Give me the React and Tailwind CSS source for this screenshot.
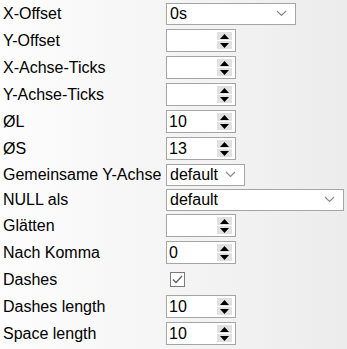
import React from 'react'

const font = { fontFamily: '"Liberation Sans", Arial, sans-serif' }

const Spinner = () => (
	<div className="flex flex-col w-[15px] h-[17px] gap-px">
		<div className="flex-1 bg-[#e1e1e1] flex items-center justify-center">
			<svg width="9" height="5" viewBox="0 0 9 5">
				<path d="M4.5 0 L9 5 L0 5 Z" fill="#000" />
			</svg>
		</div>
		<div className="flex-1 bg-[#e1e1e1] flex items-center justify-center">
			<svg width="9" height="5" viewBox="0 0 9 5">
				<path d="M0 0 L9 0 L4.5 5 Z" fill="#000" />
			</svg>
		</div>
	</div>
)

const NumberBox = ({ value }) => (
	<div className="flex items-center w-[70px] h-[23px] border border-[#a5a5a5] bg-white pl-[2px] pr-[3px]">
		<span className="flex-1 text-[16px] leading-none text-black">{value}</span>
		<Spinner />
	</div>
)

const Chevron = () => (
	<svg width="11" height="7" viewBox="0 0 11 7">
		<path d="M1 1 L5.5 5.5 L10 1" stroke="#8a8a8a" strokeWidth="1.2" fill="none" />
	</svg>
)

const SelectBox = ({ value, width }) => (
	<div
		className={`flex items-center h-[22px] border border-[#a5a5a5] bg-white pl-[3px] pr-[8px] ${width}`}
	>
		<span className="flex-1 text-[16px] leading-none text-black">{value}</span>
		<Chevron />
	</div>
)

const Checkbox = () => (
	<div className="ml-[4px] w-[15px] h-[15px] border border-[#7a7a7a] bg-white flex items-center justify-center">
		<svg width="11" height="9" viewBox="0 0 11 9">
			<path d="M1 4.5 L4 7.5 L10 1" stroke="#606060" strokeWidth="1.3" fill="none" />
		</svg>
	</div>
)

const rows = [
	{ label: 'X-Offset', h: 'h-[27px]', control: <SelectBox value="0s" width="w-[130px]" /> },
	{ label: 'Y-Offset', h: 'h-[27px]', control: <NumberBox value="" /> },
	{ label: 'X-Achse-Ticks', h: 'h-[27px]', control: <NumberBox value="" /> },
	{ label: 'Y-Achse-Ticks', h: 'h-[27px]', control: <NumberBox value="" /> },
	{ label: 'ØL', h: 'h-[27px]', control: <NumberBox value="10" /> },
	{ label: 'ØS', h: 'h-[27px]', control: <NumberBox value="13" /> },
	{ label: 'Gemeinsame Y-Achse', h: 'h-[25px]', control: <SelectBox value="default" width="w-[79px]" /> },
	{ label: 'NULL als', h: 'h-[25px]', control: <SelectBox value="default" width="w-[178px]" /> },
	{ label: 'Glätten', h: 'h-[27px]', control: <NumberBox value="" /> },
	{ label: 'Nach Komma', h: 'h-[27px]', control: <NumberBox value="0" /> },
	{ label: 'Dashes', h: 'h-[27px]', control: <Checkbox /> },
	{ label: 'Dashes length', h: 'h-[27px]', control: <NumberBox value="10" /> },
	{ label: 'Space length', h: 'h-[27px]', control: <NumberBox value="10" /> },
]

export default function App() {
	return (
		<div
			className="w-[347px] h-[349px] overflow-hidden bg-gradient-to-r from-[#fdfdfd] to-[#ececec]"
			style={font}
		>
			<div className="flex flex-col">
				{rows.map((row) => (
					<div key={row.label} className={`flex items-center ${row.h}`}>
						<div className="w-[166px] pl-[3px] text-[16px] leading-[18px] text-black whitespace-nowrap">
							{row.label}
						</div>
						{row.control}
					</div>
				))}
			</div>
		</div>
	)
}
